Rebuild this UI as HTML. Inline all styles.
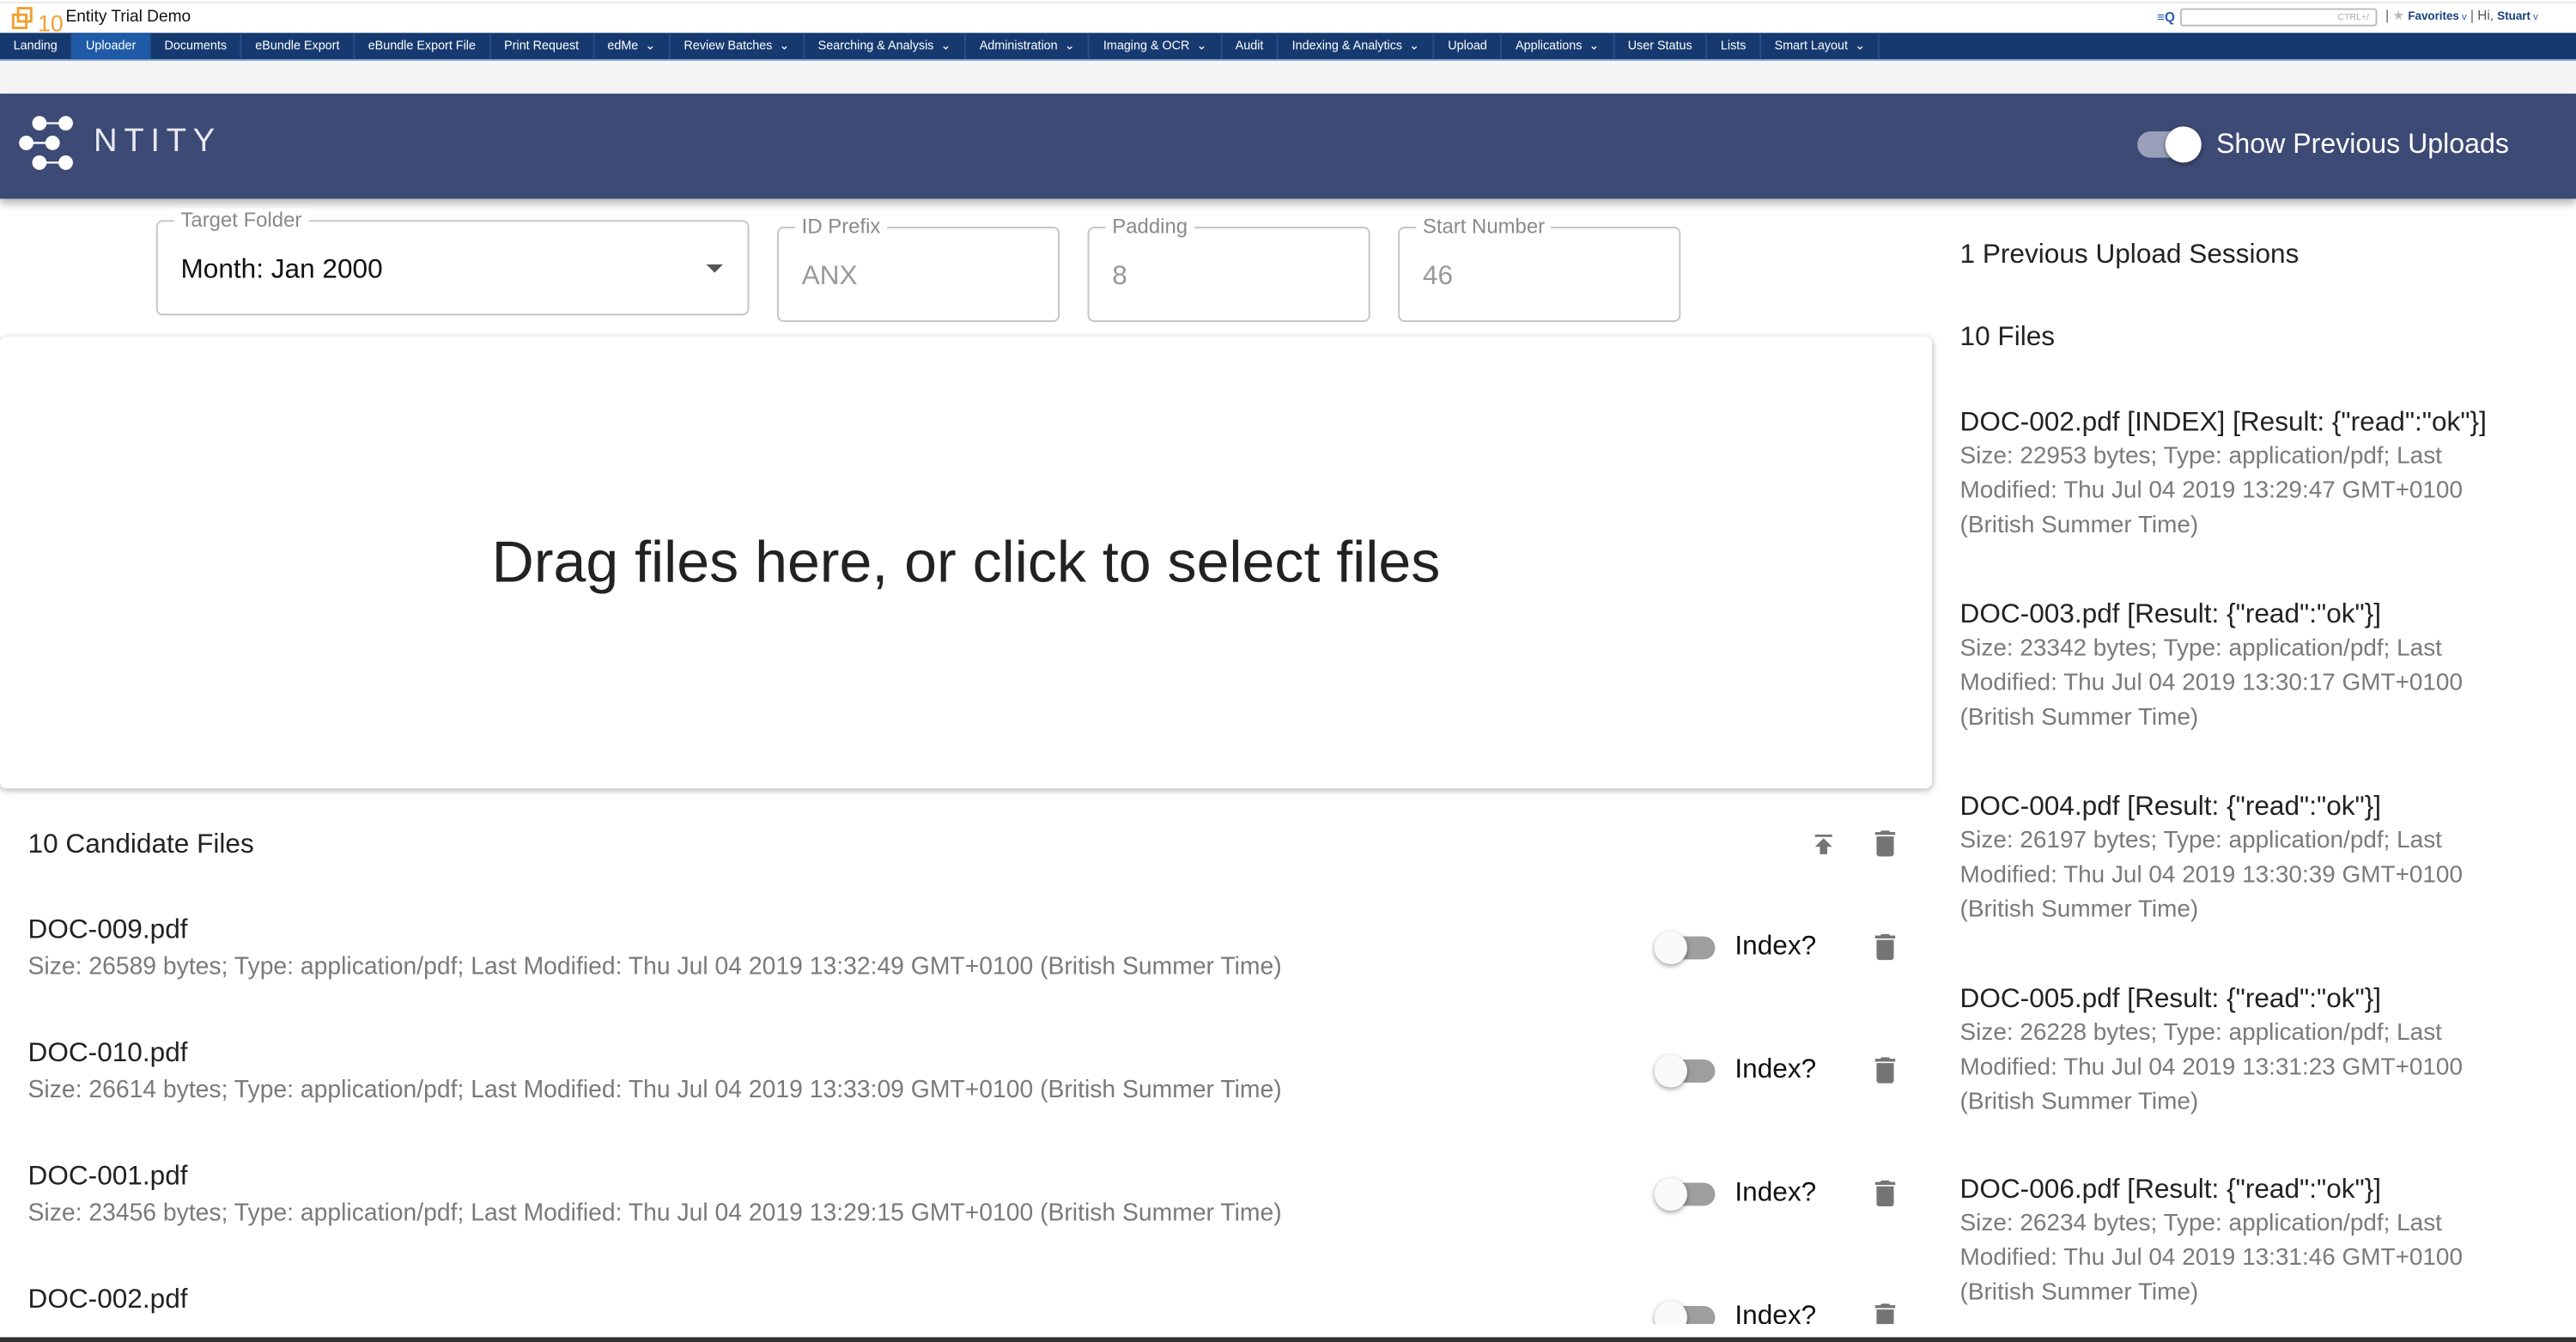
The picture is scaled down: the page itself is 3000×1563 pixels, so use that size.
<!DOCTYPE html>
<html><head><meta charset="utf-8">
<style>
html,body{margin:0;padding:0;width:3000px;height:1562px;overflow:hidden;background:#fff}
#w{position:absolute;left:0;top:0;width:1568px;height:817px;transform:scale(1.91327);transform-origin:0 0;font-family:"Liberation Sans",Arial,sans-serif;background:#fff}
.a{position:absolute;white-space:nowrap}
.nav{position:absolute;left:0;top:20px;width:1568px;height:16px;background:#163a70;border-bottom:1px solid #7fa6d8}
.nav span{display:inline-block;height:16px;line-height:15px;font-size:7.5px;color:#fff;padding:0 8.2px;border-right:1px solid #24508a;box-sizing:border-box;vertical-align:top}
.nav span.on{background:#1f5aa6}
.fs{position:absolute;border:1px solid #c4c4c4;border-radius:4px;box-sizing:border-box}
.fs .l{position:absolute;top:-8px;left:10px;background:#fff;padding:0 4px;font-size:12.5px;color:#8a8a8a}
.fs .v{position:absolute;left:14px;font-size:16.5px}
.nm{font-size:16.5px;color:#222}
.sb{font-size:14.6px;color:#7a7a7a}
.ls{font-size:14.8px}
.tg{position:absolute;width:34px;height:14px;border-radius:7px;background:#9e9e9e}
.tg:after{content:"";position:absolute;left:-3px;top:-3px;width:20px;height:20px;border-radius:50%;background:#fafafa;box-shadow:0 1px 3px rgba(0,0,0,.4)}
.ix{font-size:16.5px;color:#111}
</style></head><body><div id="w">
<div class="a" style="left:0;top:1px;width:1568px;height:1px;background:#e6e6e6"></div>
<svg class="a" style="left:7px;top:4px" width="32" height="16" viewBox="0 0 32 16"><rect x="4" y="1" width="8" height="8" fill="none" stroke="#f0a030" stroke-width="1.5"/><rect x="1" y="5" width="8" height="8" fill="none" stroke="#f0a030" stroke-width="1.5"/><text x="16" y="15" font-size="14" fill="#f0a030" font-family="Liberation Sans">10</text></svg>
<div class="a" style="left:40px;top:5px;font-size:10px;color:#111">Entity Trial Demo</div>
<div class="a" style="left:1313px;top:6px;font-size:8px;color:#2a5bb0;font-weight:bold">≡Q</div>
<div class="a" style="left:1327px;top:5px;width:120px;height:11px;border:1px solid #bbb;border-radius:2px;font-size:5.5px;color:#aaa;text-align:right;line-height:11px;box-sizing:border-box;padding-right:4px">CTRL+/</div>
<div class="a" style="left:1452px;top:5px;font-size:8px;color:#555">| <span style="color:#bbb">★</span> <b style="color:#1b3f7d;font-size:7px">Favorites</b><span style="color:#2a5bb0;font-size:6px"> v</span> | Hi, <b style="color:#1b3f7d;font-size:7px">Stuart</b><span style="color:#2a5bb0;font-size:6px"> v</span></div>
<div class="nav"><span>Landing</span><span class="on">Uploader</span><span>Documents</span><span>eBundle Export</span><span>eBundle Export File</span><span>Print Request</span><span>edMe &nbsp;⌄</span><span>Review Batches &nbsp;⌄</span><span>Searching &amp; Analysis &nbsp;⌄</span><span>Administration &nbsp;⌄</span><span>Imaging &amp; OCR &nbsp;⌄</span><span>Audit</span><span>Indexing &amp; Analytics &nbsp;⌄</span><span>Upload</span><span>Applications &nbsp;⌄</span><span>User Status</span><span>Lists</span><span>Smart Layout &nbsp;⌄</span></div>
<div class="a" style="left:0;top:37px;width:1568px;height:20px;background:#f6f5f6"></div>
<div class="a" style="left:0;top:57px;width:1568px;height:64px;background:#3d4a75;box-shadow:0 3px 5px rgba(0,0,0,.3)"></div>
<svg class="a" style="left:10px;top:68px" width="44" height="40" viewBox="0 0 44 40"><g fill="#fff" stroke="#fff" stroke-width="1.2"><circle cx="14" cy="7" r="3.8"/><circle cx="30" cy="7" r="3.8"/><line x1="14" y1="7" x2="30" y2="7"/><circle cx="6" cy="19" r="3.8"/><circle cx="22" cy="19" r="3.8"/><line x1="6" y1="19" x2="22" y2="19"/><circle cx="14" cy="31" r="3.8"/><circle cx="30" cy="31" r="3.8"/><line x1="14" y1="31" x2="30" y2="31"/></g></svg>
<div class="a" style="left:57px;top:75px;font-size:20px;color:#e8eaf2;letter-spacing:4px;font-weight:300">NTITY</div>
<div class="a" style="left:1301px;top:80px;width:38px;height:16px;border-radius:8px;background:#9aa0bb"></div>
<div class="a" style="left:1318px;top:77px;width:22px;height:22px;border-radius:50%;background:#fff;box-shadow:0 1px 3px rgba(0,0,0,.4)"></div>
<div class="a" style="left:1349px;top:78px;font-size:16.8px;color:#fff">Show Previous Uploads</div>
<div class="fs" style="left:95px;top:134px;width:361px;height:58px"><div class="l">Target Folder</div><div class="v" style="top:20px;color:#111">Month: Jan 2000</div><div style="position:absolute;right:15px;top:26px;border-left:5px solid transparent;border-right:5px solid transparent;border-top:5px solid #555"></div></div>
<div class="fs" style="left:473px;top:138px;width:172px;height:58px"><div class="l">ID Prefix</div><div class="v" style="top:20px;color:#999">ANX</div></div>
<div class="fs" style="left:662px;top:138px;width:172px;height:58px"><div class="l">Padding</div><div class="v" style="top:20px;color:#999">8</div></div>
<div class="fs" style="left:851px;top:138px;width:172px;height:58px"><div class="l">Start Number</div><div class="v" style="top:20px;color:#999">46</div></div>
<div class="a" style="left:0;top:205px;width:1176px;height:275px;background:#fff;border-radius:4px;box-shadow:0 1px 4px rgba(0,0,0,.3)"></div>
<div class="a" style="left:0;top:322px;width:1176px;text-align:center;font-size:35.6px;color:#222">Drag files here, or click to select files</div>
<div class="a nm" style="left:17px;top:505px">10 Candidate Files</div>
<svg class="a" style="left:1101px;top:505px" width="18" height="18" viewBox="0 0 24 24"><path fill="#757575" d="M5 4v2h14V4H5zm0 10h4v6h6v-6h4l-7-7-7 7z"/></svg>
<svg class="a" style="left:1137px;top:503px" width="21" height="21" viewBox="0 0 24 24"><path fill="#757575" d="M6 19c0 1.1.9 2 2 2h8c1.1 0 2-.9 2-2V7H6v12zM19 4h-3.5l-1-1h-5l-1 1H5v2h14V4z"/></svg>

<div class="a nm" style="left:17px;top:557px">DOC-009.pdf</div>
<div class="a sb ls" style="left:17px;top:581px">Size: 26589 bytes; Type: application/pdf; Last Modified: Thu Jul 04 2019 13:32:49 GMT+0100 (British Summer Time)</div>
<div class="tg" style="left:1010px;top:570px"></div><div class="a ix" style="left:1056px;top:567px">Index?</div>
<svg class="a" style="left:1137px;top:566px" width="21" height="21" viewBox="0 0 24 24"><path fill="#757575" d="M6 19c0 1.1.9 2 2 2h8c1.1 0 2-.9 2-2V7H6v12zM19 4h-3.5l-1-1h-5l-1 1H5v2h14V4z"/></svg>

<div class="a nm" style="left:17px;top:632px">DOC-010.pdf</div>
<div class="a sb ls" style="left:17px;top:656px">Size: 26614 bytes; Type: application/pdf; Last Modified: Thu Jul 04 2019 13:33:09 GMT+0100 (British Summer Time)</div>
<div class="tg" style="left:1010px;top:645px"></div><div class="a ix" style="left:1056px;top:642px">Index?</div>
<svg class="a" style="left:1137px;top:641px" width="21" height="21" viewBox="0 0 24 24"><path fill="#757575" d="M6 19c0 1.1.9 2 2 2h8c1.1 0 2-.9 2-2V7H6v12zM19 4h-3.5l-1-1h-5l-1 1H5v2h14V4z"/></svg>

<div class="a nm" style="left:17px;top:707px">DOC-001.pdf</div>
<div class="a sb ls" style="left:17px;top:731px">Size: 23456 bytes; Type: application/pdf; Last Modified: Thu Jul 04 2019 13:29:15 GMT+0100 (British Summer Time)</div>
<div class="tg" style="left:1010px;top:720px"></div><div class="a ix" style="left:1056px;top:717px">Index?</div>
<svg class="a" style="left:1137px;top:716px" width="21" height="21" viewBox="0 0 24 24"><path fill="#757575" d="M6 19c0 1.1.9 2 2 2h8c1.1 0 2-.9 2-2V7H6v12zM19 4h-3.5l-1-1h-5l-1 1H5v2h14V4z"/></svg>

<div class="a nm" style="left:17px;top:782px">DOC-002.pdf</div>
<div class="tg" style="left:1010px;top:795px"></div><div class="a ix" style="left:1056px;top:792px">Index?</div>
<svg class="a" style="left:1137px;top:791px" width="21" height="21" viewBox="0 0 24 24"><path fill="#757575" d="M6 19c0 1.1.9 2 2 2h8c1.1 0 2-.9 2-2V7H6v12zM19 4h-3.5l-1-1h-5l-1 1H5v2h14V4z"/></svg>

<div class="a nm" style="left:1193px;top:146px">1 Previous Upload Sessions</div>
<div class="a nm" style="left:1193px;top:196px">10 Files</div>
<div class="a" style="left:1193px;top:247px;line-height:21px">
<div class="nm">DOC-002.pdf [INDEX] [Result: {"read":"ok"}]</div>
<div class="sb">Size: 22953 bytes; Type: application/pdf; Last<br>Modified: Thu Jul 04 2019 13:29:47 GMT+0100<br>(British Summer Time)</div>
</div>
<div class="a" style="left:1193px;top:364px;line-height:21px">
<div class="nm">DOC-003.pdf [Result: {"read":"ok"}]</div>
<div class="sb">Size: 23342 bytes; Type: application/pdf; Last<br>Modified: Thu Jul 04 2019 13:30:17 GMT+0100<br>(British Summer Time)</div>
</div>
<div class="a" style="left:1193px;top:481px;line-height:21px">
<div class="nm">DOC-004.pdf [Result: {"read":"ok"}]</div>
<div class="sb">Size: 26197 bytes; Type: application/pdf; Last<br>Modified: Thu Jul 04 2019 13:30:39 GMT+0100<br>(British Summer Time)</div>
</div>
<div class="a" style="left:1193px;top:598px;line-height:21px">
<div class="nm">DOC-005.pdf [Result: {"read":"ok"}]</div>
<div class="sb">Size: 26228 bytes; Type: application/pdf; Last<br>Modified: Thu Jul 04 2019 13:31:23 GMT+0100<br>(British Summer Time)</div>
</div>
<div class="a" style="left:1193px;top:714px;line-height:21px">
<div class="nm">DOC-006.pdf [Result: {"read":"ok"}]</div>
<div class="sb">Size: 26234 bytes; Type: application/pdf; Last<br>Modified: Thu Jul 04 2019 13:31:46 GMT+0100<br>(British Summer Time)</div>
</div>
<div class="a" style="left:0;top:806px;width:1180px;height:9px;background:#fff"></div>
<div class="a" style="left:0;top:814px;width:1568px;height:3px;background:#333"></div>
</div></body></html>
